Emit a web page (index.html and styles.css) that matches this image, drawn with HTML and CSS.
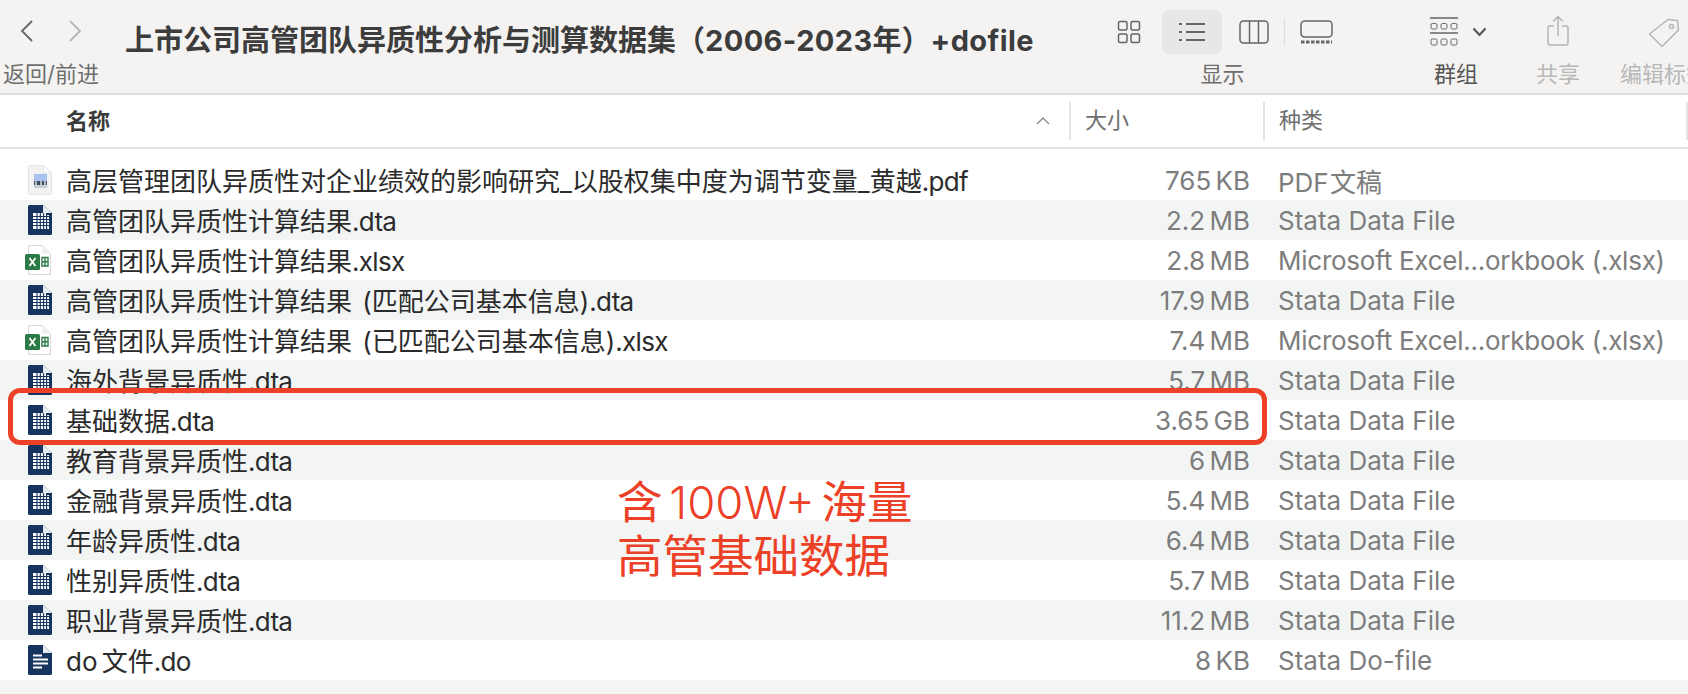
FILE: index.html
```html
<!DOCTYPE html>
<html lang="zh-CN">

<head>
    <meta charset="UTF-8" />
    <title>上市公司高管团队异质性分析与测算数据集</title>
    <link rel="stylesheet" href="styles.css">
</head>

<body>
    <svg class="defs">
        <symbol id="dta" viewBox="0 0 24 30">
            <path d="M1.500 0H15L24 8V28.500A1.500 1.500 0 0 1 22.500 30H1.500A1.500 1.500 0 0 1 0 28.500V1.500A1.500 1.500 0 0 1 1.500 0Z" fill="#15355f" />
            <path d="M15 0L24 8H15Z" fill="#e6ebf2" />
            <path d="M5 8H18V10H21V24H5Z" fill="#fff" />
            <path d="M5 11.500H21M5 14.500H21M5 17.500H21M5 20.500H21M9 8V24M12.300 8V24M15.600 8V24M18.600 10V24" stroke="#15355f" stroke-width="1.100" fill="none" />
        </symbol>
        <symbol id="dofile" viewBox="0 0 24 30">
            <path d="M1.500 0H15L24 8V28.500A1.500 1.500 0 0 1 22.500 30H1.500A1.500 1.500 0 0 1 0 28.500V1.500A1.500 1.500 0 0 1 1.500 0Z" fill="#15355f" />
            <path d="M15 0L24 8H15Z" fill="#e6ebf2" />
            <path d="M5 10.500H14M5 14.500H20M5 18.500H20M5 22.500H14" stroke="#fff" stroke-width="2" fill="none" />
        </symbol>
        <symbol id="xlsx" viewBox="0 0 26 30">
            <path d="M3.500 .5H17L25.500 8.500V29.500H3.500Z" fill="#fff" stroke="#d9d9d9" />
            <path d="M17 .5L25.500 8.500H17Z" fill="#eee" />
            <rect x="0" y="9" width="15" height="16" rx="1.500" fill="#2c7a46" />
            <path d="M4.500 13L10.500 21M10.500 13L4.500 21" stroke="#fff" stroke-width="1.800" />
            <path d="M17 12.500H23V21H17ZM20 12.500V21M17 16.800H23" fill="none" stroke="#2c7a46" stroke-width="1.400" />
        </symbol>
        <symbol id="pdf" viewBox="0 0 24 30">
            <path d="M.5 1.500A1 1 0 0 1 1.500 .5H15.500L23.500 8V28.500A1 1 0 0 1 22.500 29.500H1.500A1 1 0 0 1 .5 28.500Z" fill="#f2f2f2" stroke="#e4e4e4" />
            <path d="M15.500 .5L23.500 8H15.500Z" fill="#fff" stroke="#e4e4e4" />
            <rect x="6" y="9" width="13" height="7" fill="#a9c2ee" />
            <path d="M6 16H19V20H6Z" fill="#3f4a5e" />
            <path d="M8 16V21M13 16V21M17 16V21" stroke="#dfe3ea" stroke-width="1.500" />
            <rect x="6" y="20" width="13" height="3" fill="#c9ccd2" />
        </symbol>
    </svg>

    <header class="toolbar">
        <div class="nav-group">
            <div class="nav-arrows">
                <svg width="14" height="24" viewBox="0 0 14 24"><path d="M12 2L2 12L12 22" fill="none" stroke="#666" stroke-width="1.800" /></svg>
                <svg width="14" height="24" viewBox="0 0 14 24"><path d="M2 2L12 12L2 22" fill="none" stroke="#b5b5b5" stroke-width="1.800" /></svg>
            </div>
            <div class="tool-label">返回/前进</div>
        </div>
        <h1 class="title">上市公司高管团队异质性分析与测算数据集（<span class="title-latin">2006-2023</span>年）<span class="title-latin">+dofile</span></h1>
        <div class="tool-group view-group">
            <div class="view-icons">
                <svg width="24" height="24" viewBox="0 0 24 24" fill="none" stroke="#666" stroke-width="1.500">
                    <rect x="1.500" y="1.500" width="8.500" height="8.500" rx="1.500" /><rect x="14" y="1.500" width="8.500" height="8.500" rx="1.500" />
                    <rect x="1.500" y="14" width="8.500" height="8.500" rx="1.500" /><rect x="14" y="14" width="8.500" height="8.500" rx="1.500" />
                </svg>
                <div class="view-active">
                    <svg width="26" height="20" viewBox="0 0 26 20" fill="none" stroke="#666" stroke-width="2">
                        <path d="M7 2H26M7 10H26M7 18H26" /><path d="M0 2H3M0 10H3M0 18H3" />
                    </svg>
                </div>
                <svg width="30" height="24" viewBox="0 0 30 24" fill="none" stroke="#666" stroke-width="1.500">
                    <rect x="1" y="1" width="28" height="22" rx="3.500" /><path d="M10.500 1V23M19.500 1V23" />
                </svg>
                <span class="view-sep"></span>
                <svg width="33" height="24" viewBox="0 0 33 24" fill="none" stroke="#666" stroke-width="1.500">
                    <rect x="1" y="1" width="31" height="16" rx="3.500" /><path d="M1 22H32" stroke-width="3" stroke-dasharray="3.500 1.500" />
                </svg>
            </div>
            <div class="tool-label">显示</div>
        </div>
        <div class="tool-group sort-group">
            <div class="sort-icons">
                <svg width="28" height="30" viewBox="0 0 28 30" fill="none" stroke="#666">
                    <path d="M0 1H28M0 16H28" stroke-width="1.500" />
                    <rect x="1" y="6.500" width="6" height="5.500" rx="1.500" /><rect x="11" y="6.500" width="6" height="5.500" rx="1.500" /><rect x="21" y="6.500" width="6" height="5.500" rx="1.500" />
                    <rect x="1" y="22" width="6" height="6" rx="1.500" /><rect x="11" y="22" width="6" height="6" rx="1.500" /><rect x="21" y="22" width="6" height="6" rx="1.500" />
                </svg>
                <svg width="15" height="10" viewBox="0 0 15 10"><path d="M1.500 1.500L7.500 8L13.500 1.500" fill="none" stroke="#555" stroke-width="2.200" /></svg>
            </div>
            <div class="tool-label">群组</div>
        </div>
        <div class="tool-group share-group muted">
            <svg class="share-icon" width="22" height="31" viewBox="0 0 22 31" fill="none" stroke="#b5b5b5" stroke-width="1.500">
                <path d="M7 11H3A2 2 0 0 0 1 13V28A2 2 0 0 0 3 30H19A2 2 0 0 0 21 28V13A2 2 0 0 0 19 11H15M11 21V1.500M6 6.500L11 1.500L16 6.500" />
            </svg>
            <div class="tool-label">共享</div>
        </div>
        <div class="tool-group tag-group muted">
            <svg class="tag-icon" width="32" height="30" viewBox="0 0 32 30" fill="none" stroke="#b5b5b5" stroke-width="1.500">
                <path d="M20 1.500L29.500 2.500L30.500 12L14 28.500L1.500 16Z" stroke-linejoin="round" /><circle cx="23.500" cy="8.500" r="2" />
            </svg>
            <div class="tool-label">编辑标签</div>
        </div>
    </header>

    <div class="columns">
        <div class="col-name"><span class="col-title">名称</span><svg width="14" height="8" viewBox="0 0 14 8"><path d="M1 7L7 1L13 7" fill="none" stroke="#888" stroke-width="1.300" /></svg></div>
        <div class="col-size">大小</div>
        <div class="col-kind">种类</div>
    </div>

    <main class="rows">
        <div class="row"><svg class="icon"><use href="#pdf" /></svg><span class="name">高层管理团队异质性对企业绩效的影响研究_以股权集中度为调节变量_黄越<span class="ext">.pdf</span></span><span class="size">765 KB</span><span class="kind kind-tight">PDF 文稿</span></div>
        <div class="row"><svg class="icon"><use href="#dta" /></svg><span class="name">高管团队异质性计算结果<span class="ext">.dta</span></span><span class="size">2.2 MB</span><span class="kind">Stata Data File</span></div>
        <div class="row"><svg class="icon icon-wide"><use href="#xlsx" /></svg><span class="name">高管团队异质性计算结果<span class="ext">.xlsx</span></span><span class="size">2.8 MB</span><span class="kind kind-long">Microsoft Excel...orkbook (.xlsx)</span></div>
        <div class="row"><svg class="icon"><use href="#dta" /></svg><span class="name">高管团队异质性计算结果 (匹配公司基本信息)<span class="ext">.dta</span></span><span class="size">17.9 MB</span><span class="kind">Stata Data File</span></div>
        <div class="row"><svg class="icon icon-wide"><use href="#xlsx" /></svg><span class="name">高管团队异质性计算结果 (已匹配公司基本信息)<span class="ext">.xlsx</span></span><span class="size">7.4 MB</span><span class="kind kind-long">Microsoft Excel...orkbook (.xlsx)</span></div>
        <div class="row"><svg class="icon"><use href="#dta" /></svg><span class="name">海外背景异质性<span class="ext">.dta</span></span><span class="size">5.7 MB</span><span class="kind">Stata Data File</span></div>
        <div class="row"><svg class="icon"><use href="#dta" /></svg><span class="name">基础数据<span class="ext">.dta</span></span><span class="size">3.65 GB</span><span class="kind">Stata Data File</span></div>
        <div class="row"><svg class="icon"><use href="#dta" /></svg><span class="name">教育背景异质性<span class="ext">.dta</span></span><span class="size">6 MB</span><span class="kind">Stata Data File</span></div>
        <div class="row"><svg class="icon"><use href="#dta" /></svg><span class="name">金融背景异质性<span class="ext">.dta</span></span><span class="size">5.4 MB</span><span class="kind">Stata Data File</span></div>
        <div class="row"><svg class="icon"><use href="#dta" /></svg><span class="name">年龄异质性<span class="ext">.dta</span></span><span class="size">6.4 MB</span><span class="kind">Stata Data File</span></div>
        <div class="row"><svg class="icon"><use href="#dta" /></svg><span class="name">性别异质性<span class="ext">.dta</span></span><span class="size">5.7 MB</span><span class="kind">Stata Data File</span></div>
        <div class="row"><svg class="icon"><use href="#dta" /></svg><span class="name">职业背景异质性<span class="ext">.dta</span></span><span class="size">11.2 MB</span><span class="kind">Stata Data File</span></div>
        <div class="row"><svg class="icon"><use href="#dofile" /></svg><span class="name name-tight">do 文件<span class="ext">.do</span></span><span class="size">8 KB</span><span class="kind">Stata Do-file</span></div>
        <div class="row"></div>
    </main>

    <!-- red annotation drawn over the list -->
    <div class="mark-box"></div>
    <div class="mark-text">含 <span class="mark-num">100W+</span> 海量<br>高管基础数据</div>
</body>

</html>
```

FILE: styles.css
```css
* {
    margin: 0;
    padding: 0;
    box-sizing: border-box;
}

html,
body {
    height: 694px;
    overflow: hidden;
}

body {
    position: relative;
    font-family: "Inter", "Noto Sans CJK SC", sans-serif;
    background-color: #ffffff;
    color: #2b2b2b;
}

.defs {
    display: none;
}

.toolbar {
    display: flex;
    height: 95px;
    background-color: #f4f3f2;
    border-bottom: 2px solid #dedddc;
    overflow: hidden;
    white-space: nowrap;
}

.nav-group {
    width: 125px;
    flex-shrink: 0;
    padding-left: 3px;
}

.nav-arrows {
    display: flex;
    gap: 34px;
    height: 60px;
    padding: 19px 0 0 17px;
}

.tool-label {
    font-size: 22px;
    line-height: 28px;
    color: #6e6e6e;
}

.title {
    width: 992px;
    flex-shrink: 0;
    font-size: 29px;
    font-weight: 700;
    line-height: 40px;
    padding-top: 21px;
    color: #3c3c3c;
}

.title-latin {
    letter-spacing: 0.4px;
}

.tool-group {
    display: flex;
    flex-direction: column;
    align-items: center;
    flex-shrink: 0;
    padding-top: 10px;
}

.view-group {
    width: 216px;
}

.view-group .tool-label,
.sort-group .tool-label {
    margin-right: 5px;
}

.view-icons {
    display: flex;
    align-items: center;
    height: 44px;
    margin-bottom: 6px;
}

.view-active {
    display: flex;
    align-items: center;
    justify-content: center;
    width: 60px;
    height: 44px;
    margin: 0 17px 0 21px;
    background-color: #e8e7e6;
    border-radius: 8px;
}

.view-sep {
    width: 1px;
    height: 28px;
    margin: 0 15px;
    background-color: #dcdcdc;
}

.sort-group {
    width: 57px;
    margin-left: 97px;
}

.sort-icons {
    display: flex;
    align-items: center;
    gap: 14px;
    height: 44px;
    margin-bottom: 6px;
}

.sort-group .tool-label {
    color: #555555;
}

.share-group {
    width: 44px;
    margin-left: 49px;
}

.tag-group {
    width: 120px;
    margin-left: 40px;
    align-items: flex-start;
}

.share-icon {
    margin: 5px 0 14px;
}

.tag-icon {
    margin: 8px 0 12px 28px;
}

.muted .tool-label {
    color: #b8b8b8;
}

.columns {
    display: grid;
    grid-template-columns: 1069px 194px 1fr;
    height: 54px;
    border-bottom: 2px solid #e4e4e4;
    font-size: 22px;
    color: #6e6e6e;
    align-items: center;
}

.col-name {
    display: flex;
    justify-content: space-between;
    align-items: center;
    padding: 0 19px 0 66px;
    font-weight: 700;
    color: #3a3a3a;
}

.col-title {
    padding-bottom: 4px;
}

.col-size,
.col-kind {
    height: 38px;
    line-height: 36px;
    padding-left: 14px;
    border-left: 2px solid #e4e4e4;
}

.col-kind {
    border-right: 2px solid #e4e4e4;
}

.rows {
    padding-top: 11px;
}

.row {
    display: grid;
    grid-template-columns: 66px 1030px 154px 1fr;
    align-items: center;
    height: 40px;
    font-size: 26px;
    white-space: nowrap;
}

.row:nth-child(even) {
    background-color: #f3f5f5;
}

.icon {
    width: 24px;
    height: 30px;
    margin-left: 28px;
    overflow: visible;
}

.icon-wide {
    width: 26px;
    margin-left: 25px;
}

.name {
    padding-bottom: 2px;
    word-spacing: 3px;
}

.name-tight {
    word-spacing: -3px;
}

.ext {
    letter-spacing: -0.7px;
}

.size {
    text-align: right;
    word-spacing: -3px;
    color: #7d7d7d;
}

.kind {
    padding-left: 28px;
    color: #7d7d7d;
}

.kind-long {
    letter-spacing: -0.25px;
}

.kind-tight {
    word-spacing: -6px;
}

.mark-box {
    position: absolute;
    left: 8px;
    top: 388px;
    width: 1259px;
    height: 57px;
    border: 5px solid #ec4027;
    border-radius: 12px;
}

.mark-text {
    position: absolute;
    left: 617px;
    top: 476px;
    font-size: 45.500px;
    line-height: 54px;
    word-spacing: -6px;
    color: #ec4027;
    white-space: nowrap;
}

.mark-num {
    font-weight: 300;
}
```
